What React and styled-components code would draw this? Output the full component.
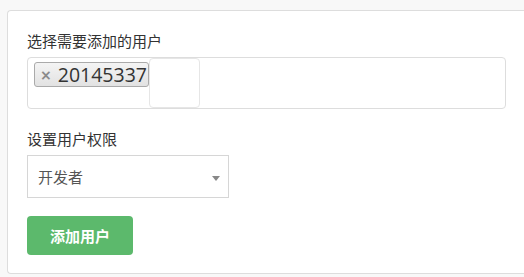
import React from 'react';
import styled, { createGlobalStyle } from 'styled-components';

const GlobalStyle = createGlobalStyle`
  html, body {
    margin: 0;
    padding: 0;
    background-color: #f8f8f8;
    font-family: 'Open Sans', 'Noto Sans CJK SC', sans-serif;
  }
`;

const App = () => {
  return (
    <>
      <GlobalStyle />
      <Page>
        <Panel>
          <Label>选择需要添加的用户</Label>
          <TagBox>
            <Tag>
              <TagRemove>×</TagRemove>
              <TagText>20145337</TagText>
            </Tag>
            <TagInput type="text" />
          </TagBox>

          <Label $top={20}>设置用户权限</Label>
          <SelectBox>
            <SelectText>开发者</SelectText>
            <Caret />
          </SelectBox>

          <SubmitButton type="button">添加用户</SubmitButton>
        </Panel>
      </Page>
    </>
  );
};

// Styled components
const Page = styled.div`
  padding: 10px 0 0 7px;
  width: 524px;
  box-sizing: border-box;
`;

// the panel runs on past the right edge of the shot, so no right border
const Panel = styled.div`
  box-sizing: border-box;
  width: 100%;
  height: 264px;
  background-color: #fff;
  border: 1px solid #ddd;
  border-right: none;
  border-radius: 4px 0 0 4px;
  padding: 20px 0 0 19px;
  display: flex;
  flex-direction: column;
  align-items: flex-start;
`;

const Label = styled.div`
  font-family: 'Noto Sans CJK SC', sans-serif;
  font-size: 15px;
  line-height: 20px;
  color: #333;
  margin-top: ${(p) => p.$top || 0}px;
  margin-bottom: 6px;
`;

const TagBox = styled.div`
  box-sizing: border-box;
  width: 479px;
  height: 52px;
  border: 1px solid #ddd;
  border-radius: 4px;
  display: flex;
  align-items: flex-start;
  padding-left: 6px;
`;

const Tag = styled.div`
  box-sizing: border-box;
  margin-top: 4px;
  height: 25px;
  display: flex;
  align-items: center;
  padding: 0 1px 0 5px;
  border: 1px solid #aaa;
  border-radius: 3px;
  background: linear-gradient(#f4f4f4, #e2e2e2);
`;

const TagRemove = styled.span`
  font-family: 'DejaVu Sans', sans-serif;
  font-size: 14px;
  font-weight: bold;
  color: #8a8a8a;
  margin-right: 6px;
  line-height: 1;
`;

const TagText = styled.span`
  font-size: 19.5px;
  line-height: 23px;
  color: #333;
`;

const TagInput = styled.input`
  box-sizing: border-box;
  width: 51px;
  height: 50px;
  margin: 0;
  padding: 0;
  border: 1px solid #e6e6e6;
  border-radius: 4px;
  outline: none;
  background: #fff;
`;

const SelectBox = styled.div`
  box-sizing: border-box;
  width: 202px;
  height: 43px;
  border: 1px solid #d6d6d6;
  display: flex;
  align-items: center;
  justify-content: space-between;
  padding: 0 8px 0 10px;
`;

const SelectText = styled.span`
  font-family: 'Noto Sans CJK SC', sans-serif;
  font-size: 15px;
  color: #555;
`;

const Caret = styled.span`
  width: 0;
  height: 0;
  margin-top: 4px;
  border-left: 4px solid transparent;
  border-right: 4px solid transparent;
  border-top: 5px solid #888;
`;

const SubmitButton = styled.button`
  margin-top: 18px;
  width: 106px;
  height: 39px;
  background-color: #5cb96c;
  color: #fff;
  border: none;
  border-radius: 4px;
  font-family: 'Noto Sans CJK SC', sans-serif;
  font-size: 15px;
  font-weight: bold;
  cursor: pointer;
`;

export default App;
